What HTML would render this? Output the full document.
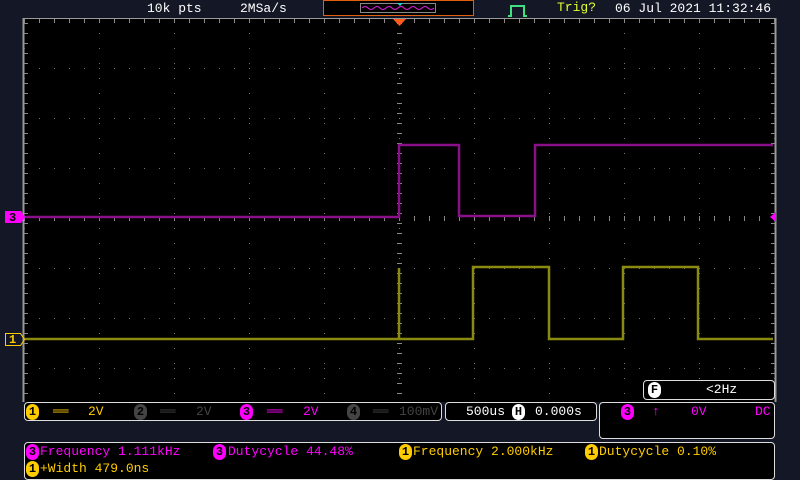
<!DOCTYPE html><html><head><style>
body{margin:0;width:800px;height:480px;background:#141826;overflow:hidden;position:relative;font-family:"Liberation Mono",monospace;}
.t{position:absolute;font-size:13px;white-space:nowrap;line-height:14px;transform-origin:left top;}
.box{position:absolute;border:1px solid #ddd;border-radius:4px;background:#000;box-sizing:border-box;}
.c{display:inline-block;width:13px;height:16px;border-radius:7px;font-size:12px;line-height:16px;text-align:center;color:#000;font-weight:bold;vertical-align:middle;}
</style></head><body>
<svg width="800" height="480" style="position:absolute;left:0;top:0">
<rect x="24" y="18" width="751" height="384" fill="#000"/>
<line x1="23.5" y1="18" x2="23.5" y2="402" stroke="#999" stroke-width="2"/>
<line x1="775.5" y1="18" x2="775.5" y2="402" stroke="#999" stroke-width="2"/>
<line x1="24" y1="18.5" x2="775" y2="18.5" stroke="#999"/>
<g id="dots"></g>
<polyline points="24,217 399,217 399,145 459,145 459,216 535,216 535,145 773,145" fill="none" stroke="#8a108a" stroke-width="2.5"/>
<polyline points="24,339 399,339 399,268 399,339 473,339 473,267 549,267 549,339 623,339 623,267 698,267 698,339 773,339" fill="none" stroke="#8a8a10" stroke-width="2.5"/>
<polygon points="393,19 406,19 399.5,26" fill="#ff5a1a"/>
<rect x="323.5" y="0.5" width="150" height="15" fill="#000" stroke="#e06010"/>
<rect x="360.5" y="3.5" width="75" height="9" fill="none" stroke="#888"/>
<path d="M362 8 q3 -3 6 0 t6 0 t6 0 t6 0 t6 0 t6 0 t6 0 t6 0 t6 0 t6 0 t6 0 t6 0" fill="none" stroke="#e020e0" stroke-width="1"/>
<path d="M397 3 l3 3 l3 -3z" fill="#20d0d0"/>
<path d="M508 16 h3 v-10 h13 v10 h3" fill="none" stroke="#40e080" stroke-width="2"/>
<path d="M5 211 h16 l4 6 l-4 6 h-16z" fill="#ff00ff"/>
<path d="M5.5 333.5 h15 l4 6 l-4 6 h-15z" fill="none" stroke="#ffcc00"/>
<path d="M770 217 l6 -5 v10z" fill="#ff00ff"/>
</svg>
<script>
var g='';for(var x=24;x<=775;x+=75){for(var y=33;y<=402;y+=15){g+='<rect x="'+x+'" y="'+y+'" width="1" height="1" fill="#777"/>';}}
for(var y=68;y<=402;y+=50){for(var x=39;x<=775;x+=15){g+='<rect x="'+x+'" y="'+y+'" width="1" height="1" fill="#777"/>';}}
for(var y=23;y<=402;y+=10){g+='<rect x="397" y="'+y+'" width="5" height="1" fill="#888"/>';g+='<rect x="24" y="'+y+'" width="4" height="1" fill="#888"/>';g+='<rect x="771" y="'+y+'" width="4" height="1" fill="#888"/>';}
for(var x=24;x<=775;x+=15){g+='<rect x="'+x+'" y="216" width="1" height="5" fill="#888"/>';g+='<rect x="'+x+'" y="19" width="1" height="4" fill="#888"/>';}
document.getElementById('dots').innerHTML=g;
</script>
<div class="t" style="left:147px;top:2px;color:#fff">10k pts</div>
<div class="t" style="left:240px;top:2px;color:#fff">2MSa/s</div>
<div class="t" style="left:557px;top:1px;color:#e0ff30">Trig?</div>
<div class="t" style="left:615px;top:2px;color:#fff">06 Jul 2021 11:32:46</div>
<div class="t" style="left:9px;top:211px;color:#000;font-weight:bold;font-size:12px">3</div>
<div class="t" style="left:9px;top:333px;color:#ffcc00;font-weight:bold;font-size:12px">1</div>
<div class="box" style="left:643px;top:380px;width:132px;height:20px"><span class="c" style="background:#fff;position:absolute;left:4px;top:1px">F</span><span class="t" style="left:62px;top:2px;color:#fff">&lt;2Hz</span></div>
<div class="box" style="left:24px;top:402px;width:418px;height:19px">
<span class="c" style="background:#ffcc00;position:absolute;left:1px;top:1px">1</span><span class="t" style="left:28px;top:2px;color:#ffcc00">══</span><span class="t" style="left:63px;top:2px;color:#ffcc00">2V</span>
<span class="c" style="background:#444;position:absolute;left:109px;top:1px">2</span><span class="t" style="left:135px;top:2px;color:#444">══</span><span class="t" style="left:171px;top:2px;color:#444">2V</span>
<span class="c" style="background:#ff00ff;position:absolute;left:215px;top:1px">3</span><span class="t" style="left:242px;top:2px;color:#ff00ff">══</span><span class="t" style="left:278px;top:2px;color:#ff00ff">2V</span>
<span class="c" style="background:#444;position:absolute;left:322px;top:1px">4</span><span class="t" style="left:348px;top:2px;color:#444">══</span><span class="t" style="left:374px;top:2px;color:#444">100mV</span></div>
<div class="box" style="left:445px;top:402px;width:152px;height:19px"><span class="t" style="left:20px;top:2px;color:#fff">500us</span><span class="c" style="background:#fff;position:absolute;left:66px;top:1px">H</span><span class="t" style="left:89px;top:2px;color:#fff">0.000s</span></div>
<div class="box" style="left:599px;top:402px;width:176px;height:37px"><span class="c" style="background:#ff00ff;position:absolute;left:21px;top:1px">3</span><span class="t" style="left:52px;top:2px;color:#ff00ff">↑</span><span class="t" style="left:91px;top:2px;color:#ff00ff">0V</span><span class="t" style="left:155px;top:2px;color:#ff00ff">DC</span></div>
<div class="box" style="left:24px;top:442px;width:751px;height:38px">
<span class="c" style="background:#ff00ff;position:absolute;left:1px;top:1px">3</span><span class="t" style="left:15px;top:2px;color:#ff00ff">Frequency 1.111kHz</span>
<span class="c" style="background:#ff00ff;position:absolute;left:188px;top:1px">3</span><span class="t" style="left:203px;top:2px;color:#ff00ff">Dutycycle 44.48%</span>
<span class="c" style="background:#ffcc00;position:absolute;left:374px;top:1px">1</span><span class="t" style="left:388px;top:2px;color:#ffcc00">Frequency 2.000kHz</span>
<span class="c" style="background:#ffcc00;position:absolute;left:560px;top:1px">1</span><span class="t" style="left:574px;top:2px;color:#ffcc00">Dutycycle 0.10%</span>
<span class="c" style="background:#ffcc00;position:absolute;left:1px;top:18px">1</span><span class="t" style="left:15px;top:19px;color:#ffcc00">+Width 479.0ns</span></div>
</body></html>
